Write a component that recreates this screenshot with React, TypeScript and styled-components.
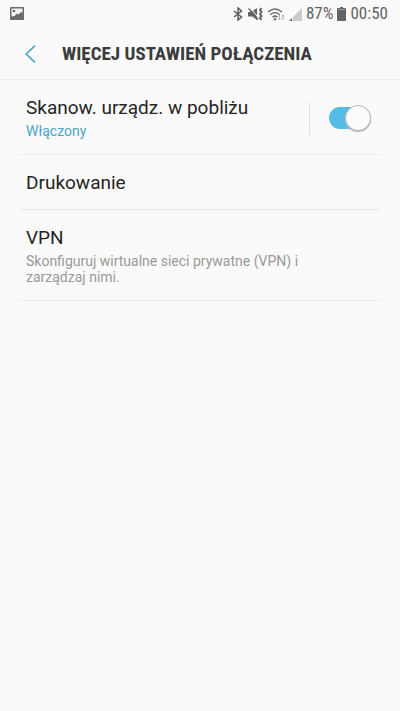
import React, { useState } from 'react';
import styled, { createGlobalStyle } from 'styled-components';

const GlobalStyle = createGlobalStyle`
  * { box-sizing: border-box; }
  body {
    margin: 0;
    background: #fafafa;
    color: #252525;
    font-family: Roboto, sans-serif;
  }
`;

const Screen = styled.div`
  display: flex;
  flex-direction: column;
  min-height: 100vh;
`;

const StatusBar = styled.div`
  display: flex;
  align-items: center;
  justify-content: space-between;
  height: 27px;
  padding: 0 12px 0 10px;
  color: #636363;
  font-family: 'Roboto Condensed', Roboto, sans-serif;
  font-size: 17px;
  line-height: 27px;
`;

const StatusGroup = styled.div`
  display: flex;
  align-items: center;
  gap: 4px;
`;

const Icon = styled.svg`
  display: block;
  flex: none;
`;

const Header = styled.header`
  display: flex;
  align-items: center;
  height: 53px;
  padding: 1px 16px 0;
  border-bottom: 1px solid #ebebeb;
`;

const BackButton = styled.button`
  display: flex;
  align-items: center;
  width: 46px;
  height: 48px;
  padding: 0 0 0 8px;
  border: 0;
  background: none;
  color: #4ba6c8;
  cursor: pointer;
`;

const Title = styled.h1`
  margin: 0;
  color: #3b3b3b;
  font-family: 'Roboto Condensed', Roboto, sans-serif;
  font-size: 19px;
  font-weight: 700;
  line-height: 24px;
  white-space: nowrap;
`;

const List = styled.ul`
  margin: 0;
  padding: 0 20px;
  list-style: none;
`;

const Row = styled.li`
  display: flex;
  align-items: center;
  padding: 16px 9px 14px 6px;
  border-bottom: 1px solid #ebebeb;
`;

const RowText = styled.a`
  flex: 1;
  min-width: 0;
  color: inherit;
  text-decoration: none;
`;

const RowTitle = styled.div`
  font-size: 19px;
  line-height: 24px;
`;

const RowNote = styled.div<{ $active?: boolean }>`
  max-width: 290px;
  padding: 3px 0 1px;
  color: ${(p) => (p.$active ? '#4ba6c8' : '#999999')};
  font-size: 14px;
  line-height: 16px;
`;

const SwitchArea = styled.div`
  display: flex;
  align-items: center;
  height: 33px;
  padding-left: 19px;
  border-left: 1px solid #e0e0e0;
`;

const Switch = styled.input`
  appearance: none;
  display: flex;
  align-items: center;
  width: 42px;
  height: 22px;
  margin: 0;
  border-radius: 11px;
  background: #c4c4c4;
  cursor: pointer;

  &::before {
    content: '';
    width: 24px;
    height: 24px;
    flex: none;
    border: 1px solid #b8b8b8;
    border-radius: 50%;
    background: #fcfcfc;
    box-shadow: 0 1px 1px #b5b5b5;
  }

  &:checked {
    justify-content: flex-end;
    background: #55bde3;
  }
`;

export default function App() {
  const [scanning, setScanning] = useState(true);

  return (
    <Screen>
      <GlobalStyle />
      <StatusBar>
        <Icon width="14" height="13" viewBox="0 0 14 13" role="img" aria-label="Obraz">
          <rect width="14" height="13" rx="1" fill="#6b6b6b" />
          <path d="M1.500 1.500h11V6L11 5 8.500 7.500 7 6.500 4.500 9 1.500 9.500Z" fill="#f4f4f4" />
          <circle cx="4" cy="4" r="1.3" fill="#6b6b6b" />
        </Icon>
        <StatusGroup>
          <Icon width="11" height="14" viewBox="0 0 11 14" role="img" aria-label="Bluetooth">
            <path d="M1 4 8.500 10 5 13V1l3.500 3L1 10" fill="none" stroke="#636363" strokeWidth="1.6" />
          </Icon>
          <Icon width="15" height="14" viewBox="0 0 15 14" role="img" aria-label="Wyciszenie z wibracją">
            <path d="M0 5h3l6-4v12L4.500 9.500H0Z" fill="#636363" />
            <path d="m2.500 1 8 10" stroke="#fafafa" />
            <path d="m.5 1.500 9.500 11" stroke="#636363" strokeWidth="1.5" />
            <path d="m13.500 1-1.500 2 1.500 2L12 7l1.500 2-1.500 2 1.500 2" fill="none" stroke="#636363" strokeWidth="2" />
          </Icon>
          <Icon width="18" height="14" viewBox="0 0 18 14" role="img" aria-label="Wi-Fi">
            <g fill="none" stroke="#707070" strokeWidth="1.5">
              <path d="M1 5q7-6 14 0M3.300 7.800q4.700-4.500 9.400 0M5.500 10.300q2.500-2.300 5 0" />
            </g>
            <circle cx="8" cy="12.300" r="1.3" fill="#707070" />
            <path d="M12.500 8v5M11 11.500l1.500 1.500 1.500-1.500M14.500 9.500 16 8l1.500 1.500M16 8v5" fill="none" stroke="#b0b0b0" />
          </Icon>
          <Icon width="13" height="14" viewBox="0 0 13 14" role="img" aria-label="Zasięg sieci">
            <path d="M13 1v13H4V10Z" fill="#cccccc" />
            <path d="M3 11v3H0Z" fill="#636363" />
          </Icon>
          <span>87%</span>
          <Icon width="9" height="14" viewBox="0 0 9 14" role="img" aria-label="Bateria">
            <path d="M3 0h3v1h2a1 1 0 0 1 1 1v11a1 1 0 0 1-1 1H1a1 1 0 0 1-1-1V2a1 1 0 0 1 1-1h2Z" fill="#636363" />
            <path d="M1 2.500h7" stroke="#9c9c9c" />
          </Icon>
          <span>00:50</span>
        </StatusGroup>
      </StatusBar>
      <Header>
        <BackButton type="button" aria-label="Wstecz">
          <Icon width="12" height="18" viewBox="0 0 12 18">
            <path d="M11 .7 2.200 9l8.800 8.300" fill="none" stroke="currentColor" strokeWidth="1.7" />
          </Icon>
        </BackButton>
        <Title>WIĘCEJ USTAWIEŃ POŁĄCZENIA</Title>
      </Header>
      <List>
        <Row>
          <RowText href="#skanowanie">
            <RowTitle id="scan-label">Skanow. urządz. w pobliżu</RowTitle>
            <RowNote $active={scanning}>{scanning ? 'Włączony' : 'Wyłączony'}</RowNote>
          </RowText>
          <SwitchArea>
            <Switch
              type="checkbox"
              role="switch"
              aria-labelledby="scan-label"
              checked={scanning}
              onChange={(e) => setScanning(e.target.checked)}
            />
          </SwitchArea>
        </Row>
        <Row>
          <RowText href="#drukowanie">
            <RowTitle>Drukowanie</RowTitle>
          </RowText>
        </Row>
        <Row>
          <RowText href="#vpn">
            <RowTitle>VPN</RowTitle>
            <RowNote>Skonfiguruj wirtualne sieci prywatne (VPN) i zarządzaj nimi.</RowNote>
          </RowText>
        </Row>
      </List>
    </Screen>
  );
}
